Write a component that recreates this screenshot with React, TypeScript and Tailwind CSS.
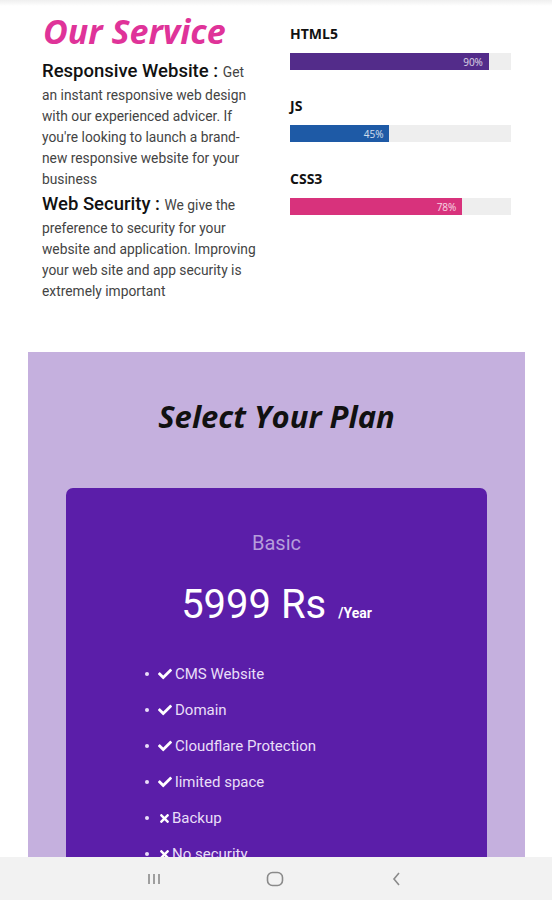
import React from "react";
import { FaCheck, FaTimes } from "react-icons/fa";

const skills = [
  { name: "HTML5", pct: 90, color: "bg-[#532c8a]", mt: "mt-[18px]" },
  { name: "JS", pct: 45, color: "bg-[#1e5aa6]", mt: "mt-[26px]" },
  { name: "CSS3", pct: 78, color: "bg-[#d8327c]", mt: "mt-[27px]" },
];

const features = [
  { ok: true, text: "CMS Website" },
  { ok: true, text: "Domain" },
  { ok: true, text: "Cloudflare Protection" },
  { ok: true, text: "limited space" },
  { ok: false, text: "Backup" },
  { ok: false, text: "No security" },
];

export default function App() {
  return (
    <div className="h-[900px] w-[552px] flex flex-col overflow-hidden bg-white font-['Roboto',sans-serif]">
      <div className="flex-1 overflow-hidden">
        <div className="h-[6px] bg-gradient-to-b from-[#efefef] to-white" />
        <div className="flex pl-[42px]">
          <div className="w-[214px]">
            <h2 className="mt-[6px] ml-[1px] text-[34px] leading-[38px] font-bold italic text-[#df3399] font-['Open_Sans',sans-serif]">
              Our Service
            </h2>
            <p className="mt-[7px] text-[13.8px] leading-[21px] text-[#444]">
              <span className="text-[18.5px] leading-[28px] font-medium text-[#111]">Responsive Website : </span>
              Get an instant responsive web design with our experienced advicer. If you're looking to launch a brand-new responsive website for your business
            </p>
            <p className="text-[13.8px] leading-[21px] text-[#444]">
              <span className="text-[18.5px] leading-[28px] font-medium text-[#111]">Web Security : </span>
              We give the preference to security for your website and application. Improving your web site and app security is extremely important
            </p>
          </div>
          <div className="ml-[34px] w-[221px]">
            {skills.map((s) => (
              <div key={s.name} className={s.mt}>
                <div className="h-[20px] leading-[20px] text-[14px] font-bold text-[#111] font-['Open_Sans',sans-serif]">
                  {s.name}
                </div>
                <div className="mt-[9px] h-[17px] w-full bg-[#eeeeee] flex">
                  <div
                    className={`${s.color} h-full flex items-center justify-end pr-[6px]`}
                    style={{ width: `${s.pct}%` }}
                  >
                    <span className="text-[10px] leading-none text-white/80 font-['Open_Sans',sans-serif]">{s.pct}%</span>
                  </div>
                </div>
              </div>
            ))}
          </div>
        </div>

        <section className="mt-[50px] mx-[28px] w-[497px] bg-[#c5b0de] pt-[43px] pb-[40px]">
          <h2 className="text-center text-[31px] leading-[42px] font-bold italic text-[#111] font-['Open_Sans',sans-serif]">
            Select Your Plan
          </h2>
          <div className="mt-[51px] mx-[38px] rounded-[7px] bg-[#5b1ea9] pt-[41px] pb-[40px]">
            <div className="text-center text-[20px] leading-[28px] text-[#b59ddb]">Basic</div>
            <div className="mt-[24px] flex items-baseline justify-center text-white">
              <span className="text-[40px] leading-[48px]">5999 Rs</span>
              <span className="ml-[12px] text-[14px] font-bold">/Year</span>
            </div>
            <ul className="mt-[27px] pl-[79px]">
              {features.map((f) => (
                <li key={f.text} className="h-[36px] flex items-center text-[15px] text-[#e9def8]">
                  <span className="w-[4px] h-[4px] rounded-full bg-[#e9def8]" />
                  <span className="ml-[9px] w-[17px] flex items-center">
                    {f.ok ? <FaCheck className="w-[14px] h-[14px] text-white" /> : <FaTimes className="w-[13px] h-[13px] text-white" />}
                  </span>
                  <span className={f.ok ? "" : "-ml-[3px]"}>{f.text}</span>
                </li>
              ))}
            </ul>
          </div>
        </section>
      </div>
      <nav className="h-[43px] shrink-0 bg-[#f2f2f2] flex items-center pl-[147px]">
        <svg width="14" height="14" viewBox="0 0 14 14" className="text-[#8a8a8a]">
          <path d="M2 2v10M7 2v10M12 2v10" stroke="currentColor" strokeWidth="1.6" fill="none" />
        </svg>
        <svg width="18" height="16" viewBox="0 0 18 16" className="ml-[105px] text-[#8a8a8a]">
          <rect x="1.5" y="1.5" width="15" height="13" rx="5" stroke="currentColor" strokeWidth="1.6" fill="none" />
        </svg>
        <svg width="10" height="16" viewBox="0 0 10 16" className="ml-[107px] text-[#8a8a8a]">
          <path d="M8 2L3 8l5 6" stroke="currentColor" strokeWidth="1.6" fill="none" />
        </svg>
      </nav>
    </div>
  );
}
